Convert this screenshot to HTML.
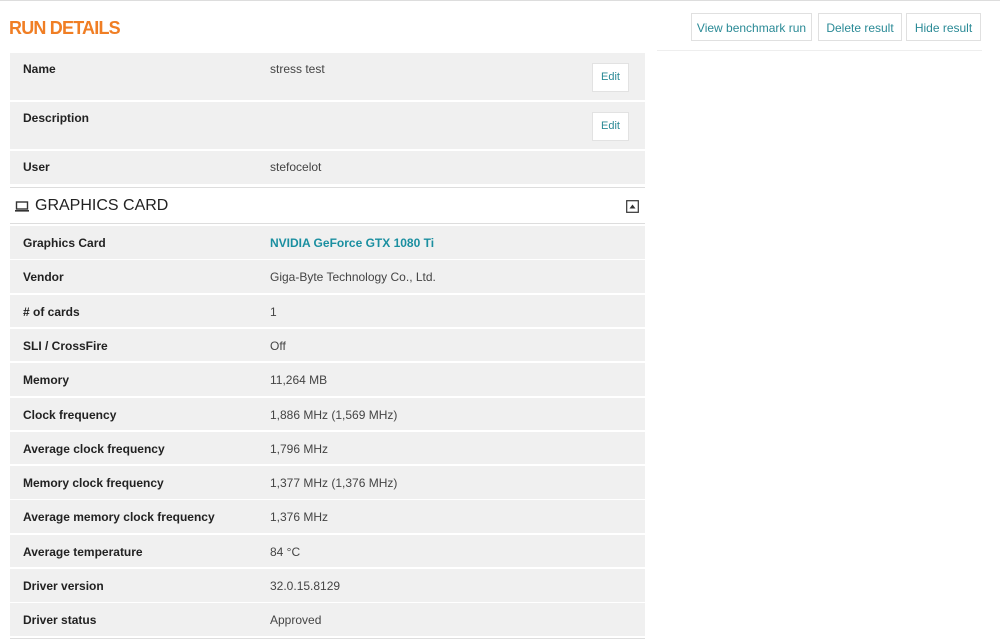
<!DOCTYPE html>
<html><head><style>
body{margin:0;width:1000px;height:639px;background:#fff;font-family:"Liberation Sans",sans-serif;position:relative;overflow:hidden;border-top:1px solid #ddd;box-sizing:border-box}
.h1{position:absolute;left:9px;top:17px;color:#f07e24;font-weight:bold;font-size:18px;letter-spacing:-0.8px}
.btn{position:absolute;top:12px;height:28px;border:1px solid #e0e0e0;background:#fff;color:#2a8a96;font-size:12px;line-height:28px;text-align:center;box-sizing:border-box}
.row{position:absolute;left:10px;width:635px;background:#f0f0f0;font-size:12px;color:#222}
.row .l{position:absolute;left:13px;font-weight:bold}
.row .v{position:absolute;left:260px;color:#444}
.edit{position:absolute;left:582px;width:37px;height:29px;background:#fff;border:1px solid #e2e2e2;box-sizing:border-box;color:#2a8a96;font-size:11px;text-align:center;line-height:27px}
.hd{position:absolute;left:10px;top:186px;width:635px;height:37px;border-top:1px solid #ddd;border-bottom:1px solid #ddd;box-sizing:border-box;font-size:16px;color:#222}
</style></head><body>
<div class="h1">RUN DETAILS</div>
<div class="btn" style="left:691px;width:121px">View benchmark run</div>
<div class="btn" style="left:818px;width:84px">Delete result</div>
<div class="btn" style="left:906px;width:75px">Hide result</div>
<div style="position:absolute;left:657px;top:49px;width:325px;height:1px;background:#eee"></div>

<div class="row" style="top:52px;height:47px"><span class="l" style="top:9px">Name</span><span class="v" style="top:9px">stress test</span><div class="edit" style="top:10px">Edit</div></div>
<div class="row" style="top:101px;height:47px"><span class="l" style="top:9px">Description</span><div class="edit" style="top:10px">Edit</div></div>
<div class="row" style="top:150px;height:33px"><span class="l" style="top:9px">User</span><span class="v" style="top:9px">stefocelot</span></div>

<div class="hd"><svg style="position:absolute;left:5px;top:13px" width="14" height="11" viewBox="0 0 14 11"><rect x="1.5" y="1" width="11" height="7" fill="none" stroke="#333" stroke-width="1.4"/><rect x="0" y="9" width="14" height="1.6" fill="#333"/></svg><span style="position:absolute;left:25px;top:9px">GRAPHICS CARD</span>
<svg style="position:absolute;left:616px;top:12px" width="13" height="13" viewBox="0 0 13 13"><rect x="0.7" y="0.7" width="11.6" height="11.6" fill="none" stroke="#333" stroke-width="1.2"/><path d="M3.5 8.5 L6.5 4.5 L9.5 8.5Z" fill="#333"/></svg></div>

<div id="rows"></div>
<script>
var d=[["Graphics Card","NVIDIA GeForce GTX 1080 Ti"],["Vendor","Giga-Byte Technology Co., Ltd."],["# of cards","1"],["SLI / CrossFire","Off"],["Memory","11,264 MB"],["Clock frequency","1,886 MHz (1,569 MHz)"],["Average clock frequency","1,796 MHz"],["Memory clock frequency","1,377 MHz (1,376 MHz)"],["Average memory clock frequency","1,376 MHz"],["Average temperature","84 °C"],["Driver version","32.0.15.8129"],["Driver status","Approved"]];
var h="";d.forEach(function(r,i){var t=225+i*34.3;h+='<div class="row" style="top:'+t+'px;height:32.5px"><span class="l" style="top:10px">'+r[0]+'</span><span class="v" style="top:10px;'+(i==0?'color:#1b8fa0;font-weight:bold':'')+'">'+r[1]+'</span></div>';});
document.getElementById("rows").innerHTML=h;
</script>
<div style="position:absolute;left:10px;top:637px;width:635px;height:1px;background:#ddd"></div>
</body></html>
